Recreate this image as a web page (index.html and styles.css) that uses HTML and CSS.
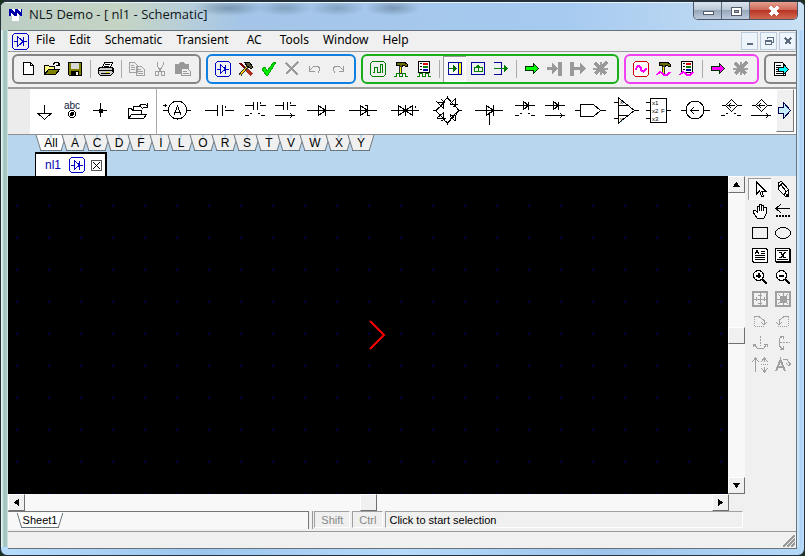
FILE: index.html
```html
<!DOCTYPE html>
<html lang="en">
<head>
<meta charset="utf-8">
<title>NL5 Demo - [ nl1 - Schematic]</title>
<link rel="stylesheet" href="styles.css">
</head>
<body>
<svg class="defs" aria-hidden="true">
  <symbol id="circuit" viewBox="0 0 16 16"><g fill="none" stroke="#0000c8"><path d="M2.500.5h11l2 2v11l-2 2h-11l-2-2v-11z"/><path d="M2 8h3.500M10.500 8H14M5.500 3.500v9l5-4.500zM10.500 3.500v9"/></g></symbol>
  <symbol id="hammer" viewBox="0 0 16 16"><path d="M3 1h8l3 2v2h-2l-1-1H9v1H6V4H3z" fill="#6b6b00" stroke="#000"/><path d="M6.500 5h2v7h-2z" fill="#ff0" stroke="#333"/></symbol>
  <symbol id="list" viewBox="0 0 16 16"><path d="M2.500.5h11v11h-11z" fill="#fff" stroke="#000"/><path d="M4 2.500h2M4 5.500h2M4 8.500h2" stroke="#000"/><path d="M7 3h5" stroke="#d00" stroke-width="2"/><path d="M7 6h5" stroke="#008000" stroke-width="2"/><path d="M7 9h5" stroke="#00a" stroke-width="2"/></symbol>
  <symbol id="pulse" viewBox="0 0 16 16"><path d="M1 15.500h2.500v-3h3v3h3v-3h3v3H15" fill="none" stroke="#008000"/></symbol>
  <symbol id="sine" viewBox="0 0 16 16"><path d="M1 14c2-4 4-3 6-1s4 2 7-2" fill="none" stroke="#f0f" stroke-width="2"/></symbol>
  <symbol id="arrow" viewBox="0 0 16 16"><path d="M1.500 5.500h8v-3l5 5-5 5v-3h-8z" stroke="#003000"/></symbol>
  <symbol id="burst" viewBox="0 0 16 16"><path d="M0 7.500h15M8 1v13" stroke="#a0a0a0" stroke-width="2"/><path d="M2 2l11 11M14 1L2 13" stroke="#999" stroke-width="3"/></symbol>
  <symbol id="up" viewBox="0 0 17 17"><path d="M4 11l4.500-5 4.500 5z"/></symbol>
  <symbol id="lcap" viewBox="0 0 30 45"><path d="M5 16.500h8.500m0-4v8m4-8v8m2-4H26m-6-4v2"/></symbol>
  <symbol id="ldiode" viewBox="0 0 30 45"><path d="M5 16.500h20M13.500 12.500v8l5-4zm5 0v8"/></symbol>
  <symbol id="lsource" viewBox="0 0 30 45"><path d="M6 16.500h3.500l6-6 6 6-6 6-6-6M21 16.500h5M12 16.500h7m-4-2l-3 2 3 2"/></symbol>
  <symbol id="ctlv" viewBox="0 0 30 45"><path d="M5 26.500h4M21 26.500h4M10 24.500h2M18 24.500h2"/></symbol>
  <symbol id="ctli" viewBox="0 0 30 45"><path d="M5 26.500h20m-5-2l3 2-3 2"/></symbol>
</svg>

<div class="window">
  <header class="titlebar">
    <svg class="app-icon" width="16" height="16"><path d="M2 4h12v6h-3v6H4v-5H2z" fill="#fff"/><path d="M1 4h2l4 3V4h2l4 3V4h1v7h-2L9 8v3H7L3 8v3H1z" fill="#0000a8"/></svg>
    <h1>NL5 Demo - [ nl1 - Schematic]</h1>
    <div class="caption-buttons">
      <button class="cap" aria-label="Minimize"><svg width="16" height="16"><path d="M3.500 8.500h10v3h-10z" fill="#fff" stroke="#555b6b"/></svg></button>
      <button class="cap" aria-label="Maximize"><svg width="16" height="16"><path d="M3.500 4.500h10v8h-10zM6.500 7.500h4v2h-4z" fill="#fff" stroke="#555b6b" fill-rule="evenodd"/></svg></button>
      <button class="cap close" aria-label="Close"><svg width="16" height="16"><path d="M4 4l8 8M12 4l-8 8" stroke="#5c3038" stroke-width="4"/><path d="M4 4l8 8M12 4l-8 8" stroke="#fff" stroke-width="3"/></svg></button>
    </div>
  </header>

  <div class="client">
    <nav class="menubar">
      <svg width="17" height="17"><use href="#circuit" width="17" height="17"/></svg>
      <button>File</button><button>Edit</button><button>Schematic</button><button class="wide">Transient</button><button class="wide">AC</button><button>Tools</button><button>Window</button><button>Help</button>
      <div class="mdi">
        <button aria-label="Minimize document"><svg width="16" height="16"><path d="M5 11h6" stroke="#5d6b7d" stroke-width="2"/></svg></button>
        <button aria-label="Restore document"><svg width="16" height="16"><path d="M6.500 6V4.500h6v5H11M4.500 7.500h6v4h-6zM4 8.500h7" fill="none" stroke="#5d6b7d"/></svg></button>
        <button aria-label="Close document"><svg width="16" height="16"><path d="M5 5l6 6M11 5l-6 6" stroke="#5d6b7d" stroke-width="2"/></svg></button>
      </div>
    </nav>

    <div class="toolbar">
      <div class="group gray">
        <button aria-label="New"><svg><path d="M2.500 1.500h7l3 3v9h-10zM9.500 1.500v3h3" fill="#fff" stroke="#000"/></svg></button>
        <button aria-label="Open"><svg><path d="M.5 13.500v-9h4l1 1h5v3" fill="#ff8" stroke="#000"/><path d="M.5 13.500l4-5h11l-4 5z" fill="#808000" stroke="#000"/><path d="M9 3.500l2-2h3l1 2m0-2v3h-3" fill="none" stroke="#000"/></svg></button>
        <button aria-label="Save"><svg><path d="M1.500 1.500h13v13h-12l-1-1z" fill="#808000" stroke="#000"/><path d="M4 2h8v6H4z" fill="#d8d8d8"/><path d="M4 10h8v4H4z" fill="#000"/><path d="M9 11h2v3H9z" fill="#fff"/></svg></button>
        <i class="sep"></i>
        <button aria-label="Print"><svg><path d="M4.500 6.500l2-5h8l-2 5z" fill="#fff" stroke="#000"/><path d="M7 3.500h5M6 5.500h5" stroke="#000"/><path d="M.5 7.500l2-1h11l2 1v4l-3 3h-10l-2-2z" fill="#ccc" stroke="#000"/><path d="M1 9.500h13M3 12.500h9M14.500 8v3" stroke="#000"/><path d="M8 11h3" stroke="#dd0"/></svg></button>
        <i class="sep"></i>
        <button aria-label="Copy" disabled><svg><path d="M.5 1.500h5l3 3v7h-8zM7.500 5.500h5l3 3v6h-8zM2 4.500h3M2 6.500h4M2 8.500h4M9 8.500h3M9 10.500h5M9 12.500h5" fill="#eee" stroke="#a0a0a0"/></svg></button>
        <button aria-label="Cut" disabled><svg><path d="M5 1v3l4 7M11 1v3l-4 7M3.500 10.500h3v4h-3zM9.500 10.500h3v4h-3z" fill="none" stroke="#a0a0a0"/></svg></button>
        <button aria-label="Paste" disabled><svg><path d="M0 3h4l1-2h4l1 2h4v10H0z" fill="#999"/><path d="M6.500 7.500h6l3 3v4h-9zM8 10.500h4M8 12.500h6" fill="#eee" stroke="#999"/></svg></button>
      </div>
      <div class="group blue">
        <button aria-label="Schematic"><svg><use href="#circuit"/></svg></button>
        <button aria-label="Settings"><svg><path d="M2 2l10 11" stroke="#700" stroke-width="2"/><path d="M9 9l5 5" stroke="#b03020" stroke-width="3"/><path d="M2 14l8-9" stroke="#333" stroke-width="3"/><path d="M2 14l7-8" stroke="#ffd000"/><path d="M6 1h5l4 5-2 2-4-3z" fill="#553" stroke="#000"/></svg></button>
        <button aria-label="Check"><svg><path d="M1 8l3-2 2 4 7-9h2L7 14H5z" fill="#0e0" stroke="#00b000"/></svg></button>
        <button aria-label="Delete" disabled><svg><path d="M2 2l12 12M14 1L2 13" stroke="#999" stroke-width="2"/></svg></button>
        <button aria-label="Undo" disabled><svg><path d="M2.500 5v5h5M3 9l4-4h4l2 3-2 4" fill="none" stroke="#999"/></svg></button>
        <button aria-label="Redo" disabled><svg><path d="M13.500 5v5h-5M13 9L9 5H5L3 8l2 4" fill="none" stroke="#999"/></svg></button>
      </div>
      <div class="group green">
        <button aria-label="Transient"><svg fill="none" stroke="#008000"><path d="M2.500.5h11l2 2v11l-2 2h-11l-2-2v-11z"/><path d="M3 11.500h1.500v-5h3v5h3v-8h2v8"/></svg></button>
        <button aria-label="Transient settings"><svg><use href="#hammer"/><use href="#pulse"/></svg></button>
        <button aria-label="Transient data"><svg><use href="#list"/><use href="#pulse"/></svg></button>
        <i class="sep"></i>
        <button class="on" aria-label="Single run"><svg fill="none"><path d="M11 2h3v12h-3z" fill="#ff0"/><path d="M1.500 1.500h13v12h-13zM11.500 2v12" stroke="#0000a0"/><path d="M1 7.500h9" stroke="#007000"/><path d="M6 4l4 3.500L6 11z" fill="#007000"/></svg></button>
        <button aria-label="Repeat run"><svg fill="none"><path d="M1.500 1.500h13v12h-13z" stroke="#0000a0"/><path d="M6 6.500H4.500v4h8v-4H10M8 10V4" stroke="#008000"/><path d="M5 7l3-4 3 4z" fill="#008000"/></svg></button>
        <button aria-label="Continue run"><svg fill="none"><path d="M1 1.500h7.500v12H1" stroke="#0000a0"/><path d="M1 7.500h12" stroke="#008000"/><path d="M11 4l4 3.500-4 3.500z" fill="#008000"/></svg></button>
        <i class="sep"></i>
        <button aria-label="Start"><svg fill="#0f0"><use href="#arrow"/></svg></button>
        <button aria-label="Pause" disabled><svg fill="#999"><path d="M0 6h5V2l6 5.500L5 13V9H0zM11 1h4v14h-4z"/></svg></button>
        <button aria-label="Resume" disabled><svg fill="#999"><path d="M0 1h4v14H0zM4 6h6V2l6 5.500-6 5.500V9H4z"/></svg></button>
        <button aria-label="Stop" disabled><svg><use href="#burst"/></svg></button>
      </div>
      <div class="group pink">
        <button aria-label="AC"><svg fill="none"><path d="M2.500.5h11l2 2v11l-2 2h-11l-2-2v-11z" fill="#fff" stroke="#d00000"/><path d="M3 9c1-5 4-5 5-1s4 3 5-1" stroke="#f0f" stroke-width="2"/></svg></button>
        <button aria-label="AC settings"><svg><use href="#hammer"/><use href="#sine"/></svg></button>
        <button aria-label="AC data"><svg><use href="#list"/><use href="#sine"/></svg></button>
        <i class="sep"></i>
        <button aria-label="Start AC"><svg fill="#f0f"><use href="#arrow"/></svg></button>
        <button aria-label="Stop AC" disabled><svg><use href="#burst"/></svg></button>
      </div>
      <div class="group gray cut">
        <button aria-label="Export"><svg><path d="M1.500 1.500h8l3 3v10h-11zM3 4.500h5M3 6.500h4M3 8.500h4M3 10.500h4M3 12.500h7" fill="#fff" stroke="#000"/><path d="M5.500 6.500h5v-3l5 5-5 5v-3h-5z" fill="#0ff" stroke="#000"/></svg></button>
      </div>
    </div>

    <div class="palette">
      <div class="parts">
        <svg width="28" height="45" viewBox="30 89 28 45"><path d="M44.500 105v8M38 113.500h13l-6.500 6z"/></svg>
        <svg width="28" height="45" viewBox="58 89 28 45"><circle cx="72" cy="114" r="3.500"/><circle cx="72" cy="114" r="1.500" class="solid"/><text x="64" y="109" class="abc">abc</text></svg>
        <svg width="28" height="45" viewBox="86 89 28 45"><path d="M93 110.500h14M100.500 103v14"/><path d="M99 109h3v3h-3z" class="solid"/></svg>
        <svg width="42" height="45" viewBox="114 89 42 45"><path d="M128.500 118.500v-10h3l1 2h9v4M128.500 118.500l3-4h15l-3 4zM133.500 110v-4h7l2 3M139 106l3-2h3l2 2m0-3v4h-4"/></svg>
        <svg width="42" height="45" viewBox="156 89 42 45" class="ruled"><circle cx="177.500" cy="110" r="9"/><path d="M163 110.500h5M187 110.500h4M163 105.500h4M165.500 104v3"/><path d="M174 115l3.500-9 3.500 9M175 112.500h5"/></svg>
        <svg width="42" height="45" viewBox="198 89 42 45"><path d="M205 110.500h12M217.500 105v11M222.500 105v11M225 110.500h9M225.500 106v2"/></svg>
        <svg width="30" height="45"><use href="#lcap"/><use href="#ctlv"/></svg>
        <svg width="30" height="45"><use href="#lcap"/><use href="#ctli"/></svg>
        <svg width="42" height="45" viewBox="300 89 42 45"><path d="M307 110.500h28M318.500 105.500v10l7-5zM325.500 105v11"/></svg>
        <svg width="42" height="45" viewBox="342 89 42 45"><path d="M349 110.500h28M360.500 105.500v10l7-5zM365 105.500h2.500v10h2.500"/></svg>
        <svg width="42" height="45" viewBox="384 89 42 45"><path d="M391 110.500h28M398.500 105.500v10l7-5zM405.500 105v11M412.500 105.500v10l-7-5zM415.500 106v2"/></svg>
        <svg width="42" height="45" viewBox="426 89 42 45"><path d="M433 110.500h3M459 110.500h3M436 110.500l3-3M444 101l3.500-3 3 3M456 107l3 3.500-3 3M439 114l-3-3.500M444 120l3.500 3 3-3M447.500 96v3M447.500 122v3"/><path d="M437 102l6 1 0 5zM439 108l6-7M441 99l4 4M450 104l5 1v-6zM450 101l6 6M453 107l5-3M437 118l6-5v6zM438 113l7 7M441 121l5-3M450 116l6-1-1 6zM449 121l7-8M450 114l4 4"/></svg>
        <svg width="42" height="45" viewBox="468 89 42 45"><path d="M475 110.500h28M486.500 105.500v10l7-5zM493.500 105v11M489.500 112v13"/></svg>
        <svg width="30" height="45"><use href="#ldiode"/><use href="#ctlv"/></svg>
        <svg width="30" height="45"><use href="#ldiode"/><use href="#ctli"/></svg>
        <svg width="42" height="45" viewBox="570 89 42 45"><path d="M575 110.500h5M580.500 104.500h13l7 6-7 6h-13zM601 110.500h5"/></svg>
        <svg width="30" height="45" viewBox="612 89 30 45"><path d="M614 102.500h4M614 118.500h4M618.500 98v25l16-12.500zM618 105.500h9M618 115.500h9M634 110.500h5"/><text x="620" y="104">x</text><text x="620" y="121">y</text></svg>
        <svg width="32" height="45" viewBox="642 89 32 45"><path d="M650.500 98.500h16v24h-16zM646 102.500h4M646 110.500h4M646 118.500h4M667 110.500h4"/><text x="652" y="105">x1</text><text x="652" y="113">x2</text><text x="652" y="121">x3</text><text x="661" y="113">F</text></svg>
        <svg width="42" height="45" viewBox="674 89 42 45"><circle cx="695" cy="110" r="9"/><path d="M681 110.500h5M704 110.500h6M691 110.500h8M694 107l-3 3.500 3 3.500"/></svg>
        <svg width="30" height="45"><use href="#lsource"/><use href="#ctlv"/></svg>
        <svg width="30" height="45"><use href="#lsource"/><use href="#ctli"/></svg>
      </div>
      <button class="next" aria-label="More components"><svg width="16" height="20"><path d="M1.500 6.500h5v-5l7 8-7 8v-5h-5z" fill="#c8ecff" stroke="#000050"/></svg></button>
    </div>

    <div class="letters">
      <button class="all">All</button><button>A</button><button>C</button><button>D</button><button>F</button><button class="narrow">I</button><button>L</button><button>O</button><button>R</button><button>S</button><button>T</button><button>V</button><button class="broad">W</button><button>X</button><button>Y</button>
    </div>

    <div class="documents">
      <div class="doc"><span>nl1</span><svg width="16" height="16"><use href="#circuit"/></svg><button aria-label="Close nl1"><svg width="9" height="9"><path d="M1 1l7 7M8 1L1 8" stroke="#000"/></svg></button></div>
    </div>

    <div class="workspace">
      <div class="left">
        <div class="view">
          <main class="canvas"><svg class="cursor" width="18" height="32"><path d="M1 2l14 14L1 30" fill="none" stroke="#f00" stroke-width="2"/></svg></main>
          <div class="scroll vertical"><button aria-label="Scroll up"><svg><use href="#up"/></svg></button><span class="thumb"></span><button aria-label="Scroll down"><svg class="r180"><use href="#up"/></svg></button></div>
        </div>
        <div class="scroll horizontal"><button aria-label="Scroll left"><svg class="r270"><use href="#up"/></svg></button><span class="thumb"></span><button aria-label="Scroll right"><svg class="r90"><use href="#up"/></svg></button></div>
        <div class="sheetbar">
          <div class="sheets"><button>Sheet1</button></div>
          <span class="cell key">Shift</span><span class="cell key">Ctrl</span><span class="cell hint">Click to start selection</span>
        </div>
      </div>
      <div class="tools">
        <button class="on" aria-label="Select"><svg><path d="M4.500 1v12l3-3 2 5h2l-2-5h4z" fill="#fff" stroke="#000"/></svg></button>
        <button aria-label="Draw"><svg fill="#fff" stroke="#000"><path d="M3.500 1.500l3-1 7 8v5l-3 2-7-7z"/><path d="M3.500 6l4-4M9.500 14.500l1-4 3-1M6 4l5 6" fill="none"/><path d="M11 13h2v2h-2z" fill="#000"/></svg></button>
        <button aria-label="Pan"><svg><path d="M5 15l-4-6v-2h2l2 2V3h2v5-7h2v7-6h2v6-4h3v7l-2 4z" fill="#fff" stroke="#000"/></svg></button>
        <button aria-label="Wire"><svg fill="none" stroke="#000"><path d="M1 5.500h14M6 1L1 5.500 6 10"/><path d="M1 13h14" stroke-width="2" stroke-dasharray="2 1"/></svg></button>
        <button aria-label="Rectangle"><svg fill="none" stroke="#000"><path d="M.5 2.500h15v11H.5z"/></svg></button>
        <button aria-label="Ellipse"><svg fill="none" stroke="#000"><ellipse cx="8" cy="8" rx="7.500" ry="5.500"/></svg></button>
        <button aria-label="Text"><svg fill="#fff" stroke="#000"><path d="M.5 1.500h14v13H.5z"/><path d="M15.500 2v13.500H1M3 7l2-4 2 4M4 5.500h3M9 4.500h4M9 6.500h4M3 8.500h10M3 10.500h10M3 12.500h10"/></svg></button>
        <button aria-label="Variable"><svg fill="none" stroke="#000"><path d="M.5 1.500h14v13H.5z" fill="#fff"/><path d="M15.500 2v13.500H1M2 3.500h11M2 12.500h11"/><path d="M4 5.500h2l3 5h2M11 5.500h-1l-4 5H4" stroke-width="1.500"/></svg></button>
        <button aria-label="Zoom in"><svg fill="#fff" stroke="#000"><circle cx="6.500" cy="6.500" r="5"/><path d="M4 6.500h5M6.500 4v5M10 10l5 5" stroke-width="2"/></svg></button>
        <button aria-label="Zoom out"><svg fill="#fff" stroke="#000"><circle cx="6.500" cy="6.500" r="5"/><path d="M4 6.500h5M10 10l5 5" stroke-width="2"/></svg></button>
        <button aria-label="Fit" disabled><svg fill="none" stroke="#a0a0a0"><path d="M1 1h14v14H1z" stroke-width="2"/><path d="M2 8h12M8 2v12M4 6v4M12 6v4M6 4h4M6 12h4"/></svg></button>
        <button aria-label="Fit selection" disabled><svg fill="none" stroke="#a0a0a0"><path d="M1 1h14v14H1z" stroke-width="2"/><path d="M2 8h12M8 2v12M3 3l3 3M13 3l-3 3M3 13l3-3M13 13l-3-3"/><path d="M5 5h6v6H5z" fill="#a0a0a0"/></svg></button>
        <button aria-label="Rotate right" disabled><svg fill="none" stroke="#a0a0a0"><path d="M2 3.500h5l5 4v4M9 9l3 3 3-3"/><path d="M2.500 4v10M3 13.500h10" stroke-dasharray="1 1"/></svg></button>
        <button aria-label="Rotate left" disabled><svg fill="none" stroke="#a0a0a0"><path d="M14 3.500H9l-5 4v4M1 9l3 3 3-3"/><path d="M13.500 4v10M3 13.500h10" stroke-dasharray="1 1"/></svg></button>
        <button aria-label="Mirror" disabled><svg fill="none" stroke="#a0a0a0"><path d="M8.500 1v10" stroke-dasharray="2 1"/><path d="M2 9l3 4h7l3-4M1 12V9h3M12 9h3v3"/></svg></button>
        <button aria-label="Flip" disabled><svg fill="none" stroke="#a0a0a0"><path d="M5 7.500h10" stroke-dasharray="2 1"/><path d="M8 1L4 4v7l4 3M5 1h3v3M8 11v3H5"/></svg></button>
        <button aria-label="Order" disabled><svg fill="none" stroke="#a0a0a0"><path d="M3.500 15V1M0 5l3.500-4L7 5M12.500 1v4M12.500 10v5M9 5l3.500-4L16 5M9 11l3.500 4 3.500-4"/><path d="M9 7.500h7" stroke-dasharray="1 1"/></svg></button>
        <button aria-label="Rotate text" disabled><svg fill="none" stroke="#a0a0a0"><path d="M1 14L5.500 3 10 14M3 10h5" stroke-width="2"/><path d="M8 2.500h4l2 3v2M11 6l3 3 2-3"/></svg></button>
      </div>
    </div>
    <footer class="status"><svg width="12" height="12"><path d="M0 12L12 0M4 12l8-8M8 12l4-4" stroke="#999" stroke-width="1.500"/></svg></footer>
  </div>
</div>
</body>
</html>
```

FILE: styles.css
```css
* { box-sizing: border-box; }
body { margin: 0; background: #16301c; font: 12px/16px "Liberation Sans", sans-serif; color: #000; }
button { margin: 0; padding: 0; border: 0; background: none; font: inherit; color: inherit; }
svg { display: block; flex: none; shape-rendering: crispEdges; }
.defs { display: none; }

.window {
  display: flex; flex-direction: column; height: 100vh; padding: 0 7px 6px;
  border: 1px solid #26313e; border-width: 2px 1px 1px; border-radius: 7px; overflow: hidden;
  background:
    linear-gradient(90deg, #b5dcfb, #9cc6ee 25%, #b5dafa 50%, #9dc5eb 75%, #b3d8f8) bottom / 100% 8px no-repeat,
    linear-gradient(90deg, #e4f2ee 0 1px, #9fc3bd 3px, #a9cbc9 6px, #e8f4f4 7px) left / 7px 100% no-repeat,
    linear-gradient(90deg, #d6ecfc, #a9d0f4 4px, #bfe0fa 7px) right / 7px 100% no-repeat,
    #a9cdf0;
}
.titlebar {
  display: flex; align-items: flex-start; height: 28px; flex: none; margin: 0 -7px; padding: 0 6px 0 7px;
  border-top: 1px solid #e8f3f8;
  background:
    radial-gradient(ellipse 36px 8px at 228px 5px, #5d789099, transparent),
    radial-gradient(ellipse 28px 8px at 284px 5px, #5d789077, transparent),
    radial-gradient(ellipse 28px 8px at 336px 5px, #5d789077, transparent),
    radial-gradient(ellipse 28px 8px at 392px 5px, #5d789099, transparent),
    linear-gradient(90deg, #bccdc4, #c5d4c4 120px, #b6cedb 190px, #a4c5e8 240px, #a6caf0 70%, #c9e0f4);
}
.app-icon { margin-top: 2px; }
h1 { flex: 1; margin: 2px 0 0 5px; font: 13px/18px "Open Sans", sans-serif; color: #101820; white-space: nowrap; }
.caption-buttons { display: flex; height: 18px; margin-top: -1px; border: 1px solid #4b5566; border-top: 0; border-radius: 0 0 5px 5px; overflow: hidden; }
.cap { display: grid; place-items: center; width: 28px; border-right: 1px solid #5c6676; background: linear-gradient(#dde6ef, #bcc9d8 45%, #98a8bb 50%, #bccbdc); }
.cap.close { width: 47px; border: 0; background: linear-gradient(#e5a08f, #d0695a 45%, #b83526 50%, #d06a50); }

.client { display: flex; flex-direction: column; flex: 1; min-height: 0; border: 1px solid #68727c; border-width: 1px 1px 1px 0; background: #f0f0f0; }

.menubar { display: flex; align-items: center; height: 21px; flex: none; padding-left: 4px; border-bottom: 1px solid #999; font: 12px/18px "Noto Sans", sans-serif; }
.menubar > button { padding: 0 7px 2px; }
.menubar > .wide { padding-right: 11px; }
.mdi { display: flex; gap: 2px; margin-left: auto; }
.mdi button { display: grid; place-items: center; width: 17px; height: 18px; border: 1px solid #bccbdc; background: #eef4fc; }

.toolbar { display: flex; flex: none; gap: 5px; padding: 2px 0 2px 4px; overflow: hidden; }
.group { display: flex; flex: none; padding: 0 5px 0 3px; border: 2px solid; border-radius: 6px; }
.group button { width: 23px; height: 26px; padding: 5px 3px 5px 4px; }
.group svg, .tools svg { width: 16px; height: 16px; }
.on { background: #f8f8f8; box-shadow: inset 1px 1px #999, inset -1px -1px #fff; }
.sep { width: 8px; height: 18px; margin: 4px 0; background: linear-gradient(#aaa, #aaa) 4px / 1px 100% no-repeat; }
.gray { border-color: #858585; }
.blue { border-color: #1080e0; }
.green { border-color: #18b018; }
.pink { border-color: #f040f0; }
.cut { flex: 1; border-right: 0; border-radius: 6px 0 0 6px; padding-right: 0; }

.palette { display: flex; flex: none; align-items: flex-start; border-top: 2px solid #a0a09a; border-bottom: 1px solid #909090; background: #fff; margin-top: 1px; }
.parts { display: flex; flex: 1; min-width: 0; overflow: hidden; border-left: 22px solid #ececec; fill: none; stroke: #000; }
.parts text { font: 6px "Liberation Sans", sans-serif; fill: #000; stroke: none; }
.parts .abc { font-size: 10px; fill: #102040; }
.parts .solid { fill: #000; }
.ruled { background: linear-gradient(#aaa, #aaa) 0 / 1px 100% no-repeat; }
.next { display: grid; place-items: center; width: 18px; height: 43px; margin-right: 2px; background: #f0f0f0; border: 1px solid #fff; border-right-color: #777; border-bottom-color: #777; }

.letters { display: flex; flex: none; height: 17px; padding-left: 30px; background: #b8d7ef; }
.letters button, .sheets button { position: relative; z-index: 0; width: 22px; height: 16px; text-align: center; }
.letters .all { width: 26px; }
.letters .narrow { width: 18px; }
.letters .broad { width: 26px; }
.letters button::before, .letters button::after, .sheets button::before, .sheets button::after {
  content: ""; position: absolute; z-index: -1; top: 0; bottom: 0; width: 51%; background: #f0f0f0; border-bottom: 1px solid #68747c;
}
.letters button::before, .sheets button::before { left: 0; border-left: 1px solid #68747c; transform: skewX(17deg); }
.letters button::after, .sheets button::after { right: 0; border-right: 1px solid #68747c; transform: skewX(-17deg); }
.letters .all::before, .letters .all::after { background: #fff; }

.documents { display: flex; flex: none; height: 24px; padding-left: 27px; background: #b8d7ef; }
.doc { display: flex; align-items: center; gap: 6px; height: 24px; padding: 0 3px 0 9px; border: 1px solid #000; border-width: 2px 2px 0 1px; background: #fff; color: #0000b0; }
.doc span { min-width: 18px; }
.doc button { display: grid; place-items: center; width: 11px; height: 11px; border: 1px solid #555; }

.workspace { display: flex; flex: 1; min-height: 0; }
.left { display: flex; flex-direction: column; flex: 1; min-width: 0; }
.view { display: flex; flex: 1; min-height: 0; }
.canvas { position: relative; flex: 1; background: #000 radial-gradient(circle at 1px 1px, #000048 1px, transparent 1px) 8px 29px / 32px 32px; }
.cursor { position: absolute; left: calc(50% + 1px); top: calc(50% - 16px); shape-rendering: auto; }
.scroll { display: flex; justify-content: space-between; flex: none; background: #f8f8f8; }
.vertical { flex-direction: column; width: 17px; }
.horizontal { margin-right: 16px; height: 17px; }
.scroll button, .thumb { width: 17px; height: 17px; background: #f0f0f0; border: 1px solid #fff; border-right-color: #707070; border-bottom-color: #707070; }
.scroll svg { width: 15px; height: 15px; }
.r90 { transform: rotate(90deg); }
.r180 { transform: rotate(180deg); }
.r270 { transform: rotate(270deg); }

.sheetbar { display: flex; flex: none; gap: 2px; height: 20px; padding-right: 2px; font-size: 11px; }
.sheets { flex: none; width: 41%; height: 18px; margin-right: 3px; padding-left: 11px; border-top: 1px solid #777; border-right: 1px solid #777; box-shadow: 3px 0 #f0f0f0, 4px 0 #999; background: #f8f8f8; }
.sheets button { width: 42px; height: 15px; line-height: 15px; }
.sheets button::before, .sheets button::after { background: #fff; }
.cell { height: 17px; padding: 0 3px; border: 1px solid #a0a0a0; border-right-color: #fff; border-bottom-color: #fff; line-height: 16px; white-space: nowrap; }
.key { padding: 0 6px; color: #888; }
.hint { flex: 1; }

.tools { display: grid; grid-template-columns: 23px 23px; grid-auto-rows: 22px; align-content: start; flex: none; width: 51px; padding: 2px 0 0 3px; }
.tools button { display: grid; place-items: center; }

.status { display: flex; justify-content: flex-end; align-items: flex-end; flex: none; height: 17px; padding: 0 1px 1px 0; border-top: 1px solid #999; }
```
